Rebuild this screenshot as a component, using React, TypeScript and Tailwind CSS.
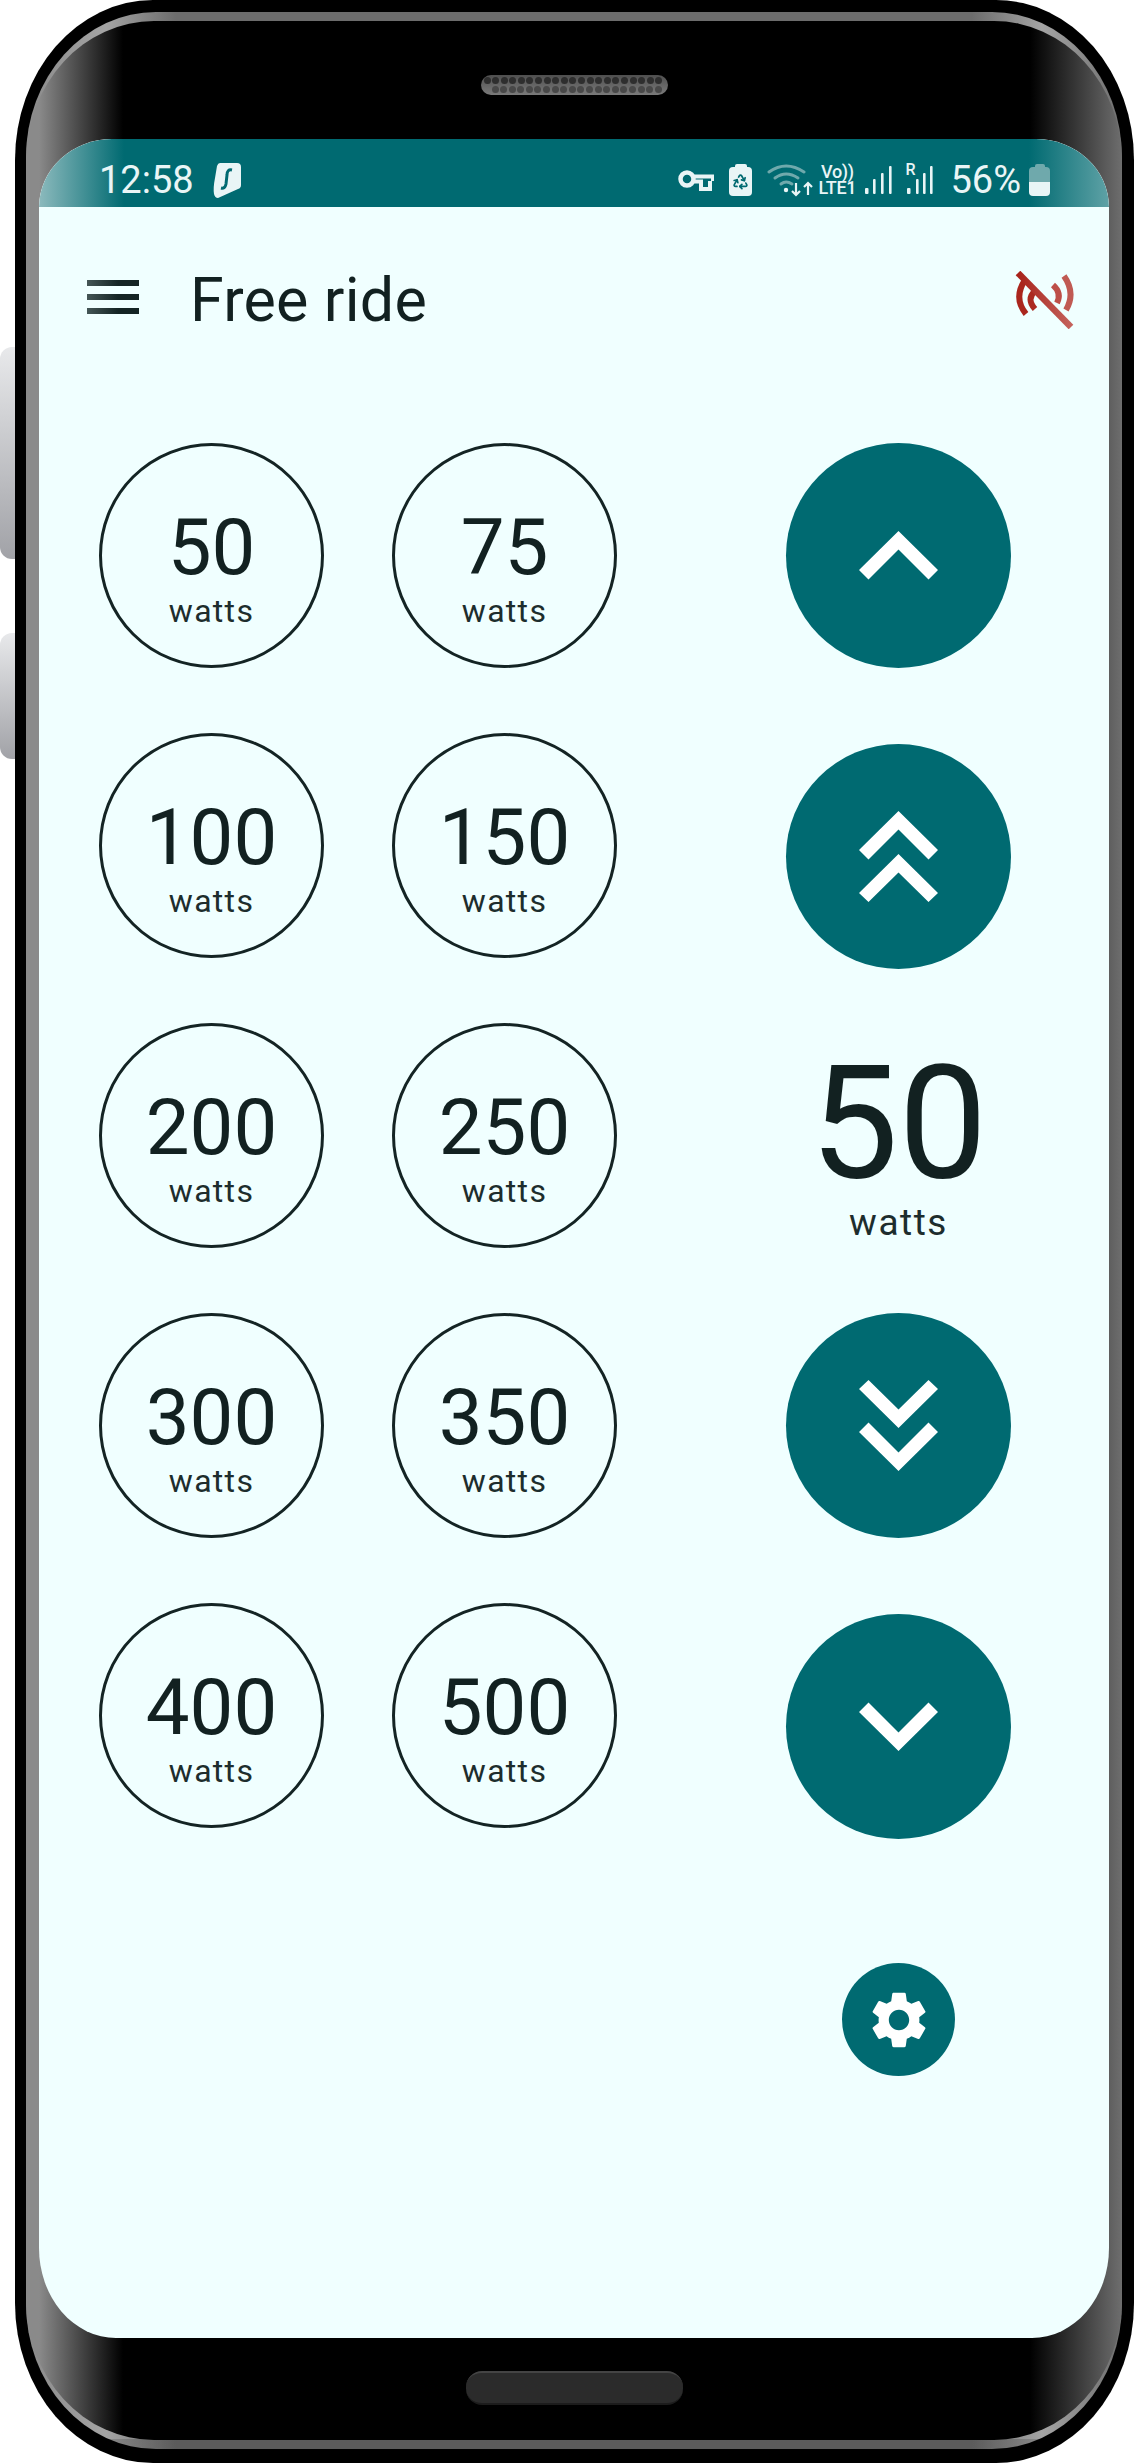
import { MdSettings } from 'react-icons/md'
import { Recycle } from 'lucide-react'

const PRESETS = [50, 75, 100, 150, 200, 250, 300, 350, 400, 500]
const ROW_ONE = Array.from({ length: 21 })
const ROW_TWO = Array.from({ length: 20 })
const ICON_WHITE = '#e9f5f6'
const ICON_MUTED = '#6fa9ac'

function Chevron({ double, down }: { double?: boolean; down?: boolean }) {
  return (
    <svg width="79" height={double ? 91 : 49} viewBox={double ? '0 0 79 91' : '0 0 79 49'} className={down ? 'rotate-180' : ''} fill="#ffffff">
      <polygon points="39.5,0 79,39 69.5,48.5 39.5,18.5 9.5,48.5 0,39" />
      {double && <polygon points="39.5,43 79,82 69.5,91 39.5,61.5 9.5,91 0,82" />}
    </svg>
  )
}

function RoundButton({ children }: { children: React.ReactNode }) {
  return (
    <button className="w-[225px] h-[225px] rounded-full bg-[#006a71] flex items-center justify-center">
      {children}
    </button>
  )
}

function PresetCircle({ value }: { value: number }) {
  return (
    <div className="w-[225px] h-[225px] rounded-full border-[3px] border-[#142424] flex flex-col items-center pt-[63px] text-[#122121]">
      <div className="text-[78px] leading-[78px]">{value}</div>
      <div className="text-[32px] leading-[32px] mt-[8px] tracking-[1.3px] text-[#1d2d2d]">watts</div>
    </div>
  )
}

function Signal({ roaming }: { roaming?: boolean }) {
  return (
    <div className="relative w-[28px] h-[30px]">
      {roaming && (
        <span className="absolute left-0 top-[-3px] text-[16px] leading-[16px] font-medium text-[#e9f5f6]">R</span>
      )}
      <svg width="28" height="30" viewBox="0 0 28 30" fill={ICON_WHITE}>
        <rect x={roaming ? 2 : 0} y="23" width="3.5" height="6" rx="1" />
        <rect x={roaming ? 11 : 8} y="14" width="2.6" height="15" rx="1" />
        <rect x={roaming ? 18 : 16} y="8" width="2.6" height="21" rx="1" />
        <rect x={roaming ? 25 : 24} y="1" width="2.6" height="28" rx="1" />
      </svg>
    </div>
  )
}

function StatusBar() {
  return (
    <div className="h-[68px] rounded-t-[73px_68px] bg-[linear-gradient(90deg,#8cbabd_0,#006a71_85px,#006a71_calc(100%-80px),#5fa2a6_100%)] flex items-center pl-[60px] pt-[14px] text-[#e9f5f6]">
      <span className="text-[38px] leading-[38px] font-normal">12:58</span>
      {/* vpn app */}
      <svg width="28" height="36" viewBox="0 0 28 36" className="ml-[19px]">
        <path d="M7 1 H24 Q28 1 28 5 V23 Q28 26 25 27 L5 36 Q2 36 1 32 Q0 26 2 16 L4 4 Q5 1 7 1 Z" fill={ICON_WHITE} />
        <path d="M19 8 Q14 7 14 13 L13 22 Q12 27 8 26" stroke="#006a71" strokeWidth="3" fill="none" />
      </svg>

      <div className="ml-auto flex items-center mr-[59px]">
        {/* key */}
        <svg width="36" height="22" viewBox="0 0 36 22" fill="none" stroke={ICON_WHITE}>
          <circle cx="9" cy="10" r="6.5" strokeWidth="4.5" />
          <path d="M15 7.5 H35 V12 M15 12.5 H23 V20 H32 V12" strokeWidth="4" />
        </svg>
        {/* battery saver */}
        <div className="ml-[15px] relative w-[23px] h-[32px] flex flex-col items-center">
          <div className="w-[12px] h-[3px] rounded-t-[2px] bg-[#e9f5f6]" />
          <div className="w-[23px] h-[29px] rounded-[4px] bg-[#e9f5f6] flex items-center justify-center">
            <Recycle size={17} color="#006a71" strokeWidth={2.4} />
          </div>
        </div>
        {/* wifi with traffic arrows */}
        <svg width="46" height="34" viewBox="0 0 46 34" fill="none" className="ml-[15px]" strokeLinecap="round">
          <path d="M2 9 Q19 -3 37 9" stroke={ICON_MUTED} strokeWidth="3" />
          <path d="M8 15 Q19 7 31 15" stroke={ICON_MUTED} strokeWidth="3" />
          <path d="M14 21 Q19 17 25 21" stroke={ICON_MUTED} strokeWidth="3" />
          <circle cx="19" cy="27" r="2.2" fill={ICON_WHITE} />
          <path d="M29 20 V32 M25 28 L29 32 L33 28 M41 32 V20 M37 24 L41 20 L45 24" stroke={ICON_WHITE} strokeWidth="2.2" strokeLinecap="butt" />
        </svg>
        <div className="ml-[5px] w-[38px] flex flex-col items-center text-[18px] leading-[16px] tracking-[-0.3px] font-medium">
          <span>Vo))</span>
          <span>LTE1</span>
        </div>
        <div className="ml-[9px]"><Signal /></div>
        <div className="ml-[12px]"><Signal roaming /></div>
        <span className="ml-[17px] text-[38px] leading-[38px] font-normal">56%</span>
        {/* battery */}
        <div className="ml-[8px] w-[21px] h-[32px] flex flex-col items-center">
          <div className="w-[10px] h-[3px] rounded-t-[2px] bg-[#6fa9ac]" />
          <div className="w-[21px] h-[29px] rounded-[4px] overflow-hidden flex flex-col">
            <div className="h-[15px] bg-[#6fa9ac]" />
            <div className="flex-1 bg-[#e9f5f6]" />
          </div>
        </div>
      </div>
    </div>
  )
}

function Header() {
  return (
    <div className="h-[180px] flex items-center pl-[48px] pr-[34px] text-[#122121]">
      <div className="w-[52px] flex flex-col gap-[8px]">
        <div className="h-[6px] bg-[linear-gradient(90deg,#445656,#142424_60%)]" />
        <div className="h-[6px] bg-[linear-gradient(90deg,#445656,#142424_60%)]" />
        <div className="h-[6px] bg-[linear-gradient(90deg,#445656,#142424_60%)]" />
      </div>
      <h1 className="ml-[51px] mt-[6px] text-[61px] leading-[70px] font-normal tracking-[0.2px]">Free ride</h1>
      {/* no connection */}
      <svg width="60" height="58" viewBox="0 0 60 58" fill="none" className="ml-auto mt-[6px]" strokeWidth="6">
        <defs>
          <linearGradient id="offRed" x1="0" x2="1" y1="0" y2="0">
            <stop offset="0" stopColor="#a8221a" />
            <stop offset="1" stopColor="#c4625c" />
          </linearGradient>
        </defs>
        <path d="M10 9 Q-2 27 11 43" stroke="#aa261d" />
        <path d="M20 20 Q11 28 20 38" stroke="#ab2a21" />
        <path d="M38 14 Q47 22 42 32" stroke="#bd4f48" />
        <path d="M49 5 Q61 22 51 39" stroke="#c05a53" />
        <path d="M3 2 L56 56" stroke="url(#offRed)" strokeWidth="6.5" />
      </svg>
    </div>
  )
}

function Screen() {
  return (
    <div className="mx-[13px] h-[2199px] bg-[#f0ffff] rounded-t-[73px_68px] rounded-b-[77px_90px] overflow-hidden">
      <StatusBar />
      <Header />
      <main className="flex pt-[56px] pl-[60px]">
        <div className="grid grid-cols-[225px_225px] gap-x-[68px] gap-y-[65px] self-start">
          {PRESETS.map((p) => (
            <PresetCircle key={p} value={p} />
          ))}
        </div>
        <div className="ml-[169px] w-[225px] flex flex-col items-center">
          <RoundButton><Chevron /></RoundButton>
          <div className="mt-[76px]">
            <RoundButton><Chevron double /></RoundButton>
          </div>
          <div className="h-[344px] pt-[75px] flex flex-col items-center text-[#122121]">
            <div className="text-[158px] leading-[158px]">50</div>
            <div className="text-[37px] leading-[37px] mt-[2px] tracking-[1.5px] text-[#1d2d2d]">watts</div>
          </div>
          <RoundButton><Chevron double down /></RoundButton>
          <div className="mt-[76px]">
            <RoundButton><Chevron down /></RoundButton>
          </div>
          <button className="mt-[124px] w-[113px] h-[113px] rounded-full bg-[#006a71] flex items-center justify-center">
            <MdSettings size={68} color="#ffffff" />
          </button>
        </div>
      </main>
    </div>
  )
}

export default function App() {
  return (
    <div className="w-[1134px] h-[2463px] bg-white flex font-[Roboto,sans-serif] overflow-hidden">
      {/* side keys */}
      <div className="w-[14.5px] shrink-0 pt-[347px]">
        <div className="h-[212px] rounded-l-[12px] bg-[linear-gradient(180deg,#e8e9eb,#a1a2a7)]" />
        <div className="h-[126px] mt-[74px] rounded-l-[12px] bg-[linear-gradient(180deg,#e8e9eb,#a1a2a7)]" />
      </div>

      {/* phone body */}
      <div className="flex-1 h-[2463px] bg-black rounded-[138px/160px] pt-[12px] pl-[11.5px] pr-[12px]">
        <div className="h-[2437px] rounded-[130px/145px] bg-[linear-gradient(180deg,rgba(0,0,0,0)_99.6%,rgba(0,0,0,0.16)_99.6%),linear-gradient(90deg,#8a8a8a_0,#a4a4a4_80px,#6c6c6c_150px,#6c6c6c_calc(100%-150px),#a4a4a4_calc(100%-80px),#6e6e6e_100%)] py-[9px]">
          <div className="h-[2419px] rounded-[128px/140px] bg-[linear-gradient(90deg,#8a8a8a_0,#8a8a8a_13px,#000_97px,#000_calc(100%-92px),#6e6e6e_100%)]">
            {/* earpiece */}
            <div className="h-[118px] pt-[54px] flex justify-center">
              <div className="w-[187px] h-[20px] rounded-full bg-[linear-gradient(180deg,#4f4f4f,#7a7a7a)] pl-[3px] pt-[2px] overflow-hidden">
                <div className="flex gap-[1.6px]">
                  {ROW_ONE.map((_, i) => (
                    <div key={i} className="w-[7px] h-[7px] shrink-0 rounded-full bg-[#2e2e2e]" />
                  ))}
                </div>
                <div className="flex gap-[1.6px] mt-[1.5px] pl-[8px]">
                  {ROW_TWO.map((_, i) => (
                    <div key={i} className="w-[7px] h-[7px] shrink-0 rounded-full bg-[#484848]" />
                  ))}
                </div>
              </div>
            </div>

            <Screen />

            {/* home key */}
            <div className="pt-[33px] flex justify-center">
              <div className="w-[217px] h-[34px] rounded-[16px] bg-[#2b2b2b] border-t-2 border-t-[#444444] border-b-2 border-b-[#1c1c1c]" />
            </div>
          </div>
        </div>
      </div>
    </div>
  )
}
